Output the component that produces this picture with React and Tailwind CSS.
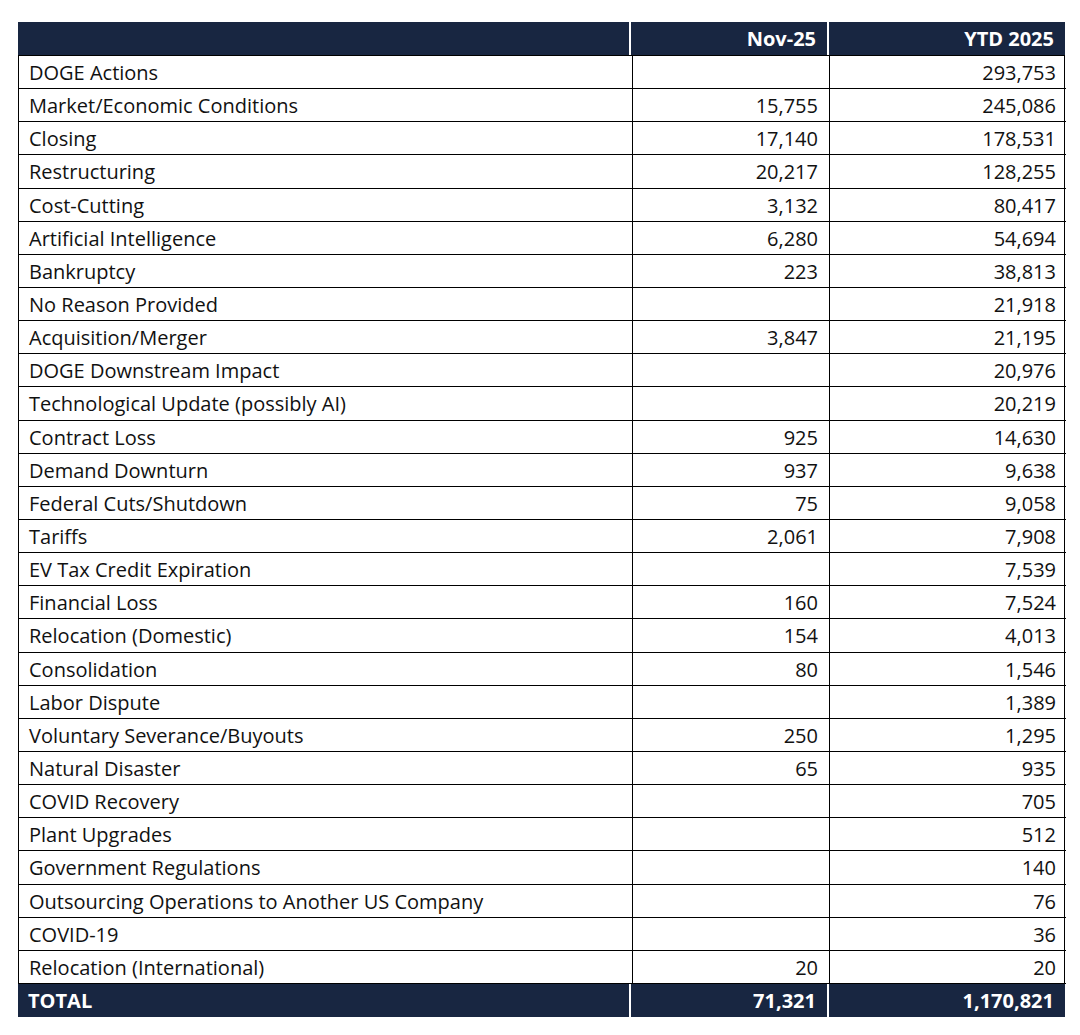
const rows = [
  ['DOGE Actions', '', '293,753'],
  ['Market/Economic Conditions', '15,755', '245,086'],
  ['Closing', '17,140', '178,531'],
  ['Restructuring', '20,217', '128,255'],
  ['Cost-Cutting', '3,132', '80,417'],
  ['Artificial Intelligence', '6,280', '54,694'],
  ['Bankruptcy', '223', '38,813'],
  ['No Reason Provided', '', '21,918'],
  ['Acquisition/Merger', '3,847', '21,195'],
  ['DOGE Downstream Impact', '', '20,976'],
  ['Technological Update (possibly AI)', '', '20,219'],
  ['Contract Loss', '925', '14,630'],
  ['Demand Downturn', '937', '9,638'],
  ['Federal Cuts/Shutdown', '75', '9,058'],
  ['Tariffs', '2,061', '7,908'],
  ['EV Tax Credit Expiration', '', '7,539'],
  ['Financial Loss', '160', '7,524'],
  ['Relocation (Domestic)', '154', '4,013'],
  ['Consolidation', '80', '1,546'],
  ['Labor Dispute', '', '1,389'],
  ['Voluntary Severance/Buyouts', '250', '1,295'],
  ['Natural Disaster', '65', '935'],
  ['COVID Recovery', '', '705'],
  ['Plant Upgrades', '', '512'],
  ['Government Regulations', '', '140'],
  ['Outsourcing Operations to Another US Company', '', '76'],
  ['COVID-19', '', '36'],
  ['Relocation (International)', '20', '20'],
];

const cols = 'grid grid-cols-[613px_198px_236px]';

export default function App() {
  return (
    <div className="min-h-[1035px] w-[1080px] bg-white pt-[22px] pl-[18px] font-['Open_Sans','Lato',sans-serif] text-[20px] text-[#111]">
      <div className="w-[1047px]">
        <div className={`${cols} h-[33px] font-bold text-white`}>
          <div className="border-r-2 border-white bg-[#182641]" />
          <div className="flex items-center justify-end border-r-2 border-white bg-[#182641] pr-[11px]">Nov-25</div>
          <div className="flex items-center justify-end bg-[#182641] pr-[11px]">YTD 2025</div>
        </div>
        <div className="grid h-[929px] grid-rows-[repeat(28,minmax(0,1fr))] border-x border-t border-black">
          {rows.map(([label, nov, ytd]) => (
            <div key={label} className={`${cols} border-b border-black`}>
              <div className="flex items-center pt-[2px] pl-[10px]">{label}</div>
              <div className="flex items-center justify-end border-x border-black pt-[2px] pr-[11px]">{nov}</div>
              <div className="flex items-center justify-end pt-[2px] pr-[10px]">{ytd}</div>
            </div>
          ))}
        </div>
        <div className={`${cols} h-[33px] font-bold text-white`}>
          <div className="flex items-center border-r-2 border-white bg-[#182641] pl-[10px]">TOTAL</div>
          <div className="flex items-center justify-end border-r-2 border-white bg-[#182641] pr-[11px]">71,321</div>
          <div className="flex items-center justify-end bg-[#182641] pr-[11px]">1,170,821</div>
        </div>
      </div>
    </div>
  );
}
